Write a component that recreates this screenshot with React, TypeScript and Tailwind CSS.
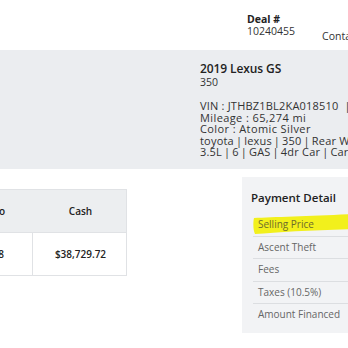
function Sep() {
  return <span className="mx-[2px]">|</span>;
}

export default function App() {
  return (
    <div className="w-[348px] h-[348px] overflow-hidden bg-white font-['Open_Sans',sans-serif] text-[#222]">
      {/* header */}
      <div className="h-[50px] flex items-start pl-[247px] pt-[13px] gap-[27px] whitespace-nowrap">
        <div className="flex flex-col">
          <span className="text-[10.5px] leading-[12px] font-bold">Deal #</span>
          <span className="text-[10.5px] leading-[12px] text-[#333]">10240455</span>
        </div>
        <span className="text-[10.5px] leading-[12px] text-[#333] mt-[17px]">Contact</span>
      </div>

      {/* vehicle band */}
      <div className="h-[119px] bg-[#ebedf0] pl-[200px] pt-[11px] whitespace-nowrap">
        <div className="text-[12px] leading-[15px] font-semibold tracking-[-0.1px]">2019 Lexus GS</div>
        <div className="text-[10.5px] leading-[12px] text-[#333]">350</div>
        <div className="mt-[12px] flex flex-col text-[11px] leading-[11.5px] tracking-[0.2px] text-[#333]">
          <span>VIN : JTHBZ1BL2KA018510&nbsp;&nbsp;|&nbsp;&nbsp;Stock : 18510</span>
          <span className="tracking-[0.4px]">Mileage : 65,274 mi</span>
          <span className="tracking-[0.4px]">Color : Atomic Silver</span>
          <span>toyota<Sep />lexus<Sep />350<Sep />Rear Wheel Drive</span>
          <span>3.5L<Sep />6<Sep />GAS<Sep />4dr Car<Sep />Car<Sep />4</span>
        </div>
      </div>

      {/* lower */}
      <div className="flex items-start">
        <div className="mt-[20px] ml-[-63px] w-[190px] border border-[#e0e2e5] text-[10px] font-semibold whitespace-nowrap">
          <div className="grid grid-cols-[95px_95px] h-[43px] bg-[#eceef0] border-b border-[#e0e2e5]">
            <div className="flex items-center justify-end pr-[28px]">Promo</div>
            <div className="flex items-center justify-center">Cash</div>
          </div>
          <div className="grid grid-cols-[95px_95px] h-[42px]">
            <div className="flex items-center justify-end pr-[28px] border-r border-[#e0e2e5]">$2,538</div>
            <div className="flex items-center justify-center">$38,729.72</div>
          </div>
        </div>

        <div className="ml-[115px] mt-[8px] flex-1 h-[156px] bg-[#f2f3f5] pt-[13px] pl-[9px] whitespace-nowrap">
          <div className="text-[11.5px] leading-[16px] font-semibold text-[#222]">Payment Detail</div>
          <div className="mt-[7px] ml-[2px] flex flex-col text-[10px] text-[#666]">
            <div className="relative h-[22.5px] flex items-center pl-[5px]">
              <svg className="absolute left-0 top-[-2px] w-[100px] h-[24px]" viewBox="0 0 100 24">
                <path d="M1 7 C20 6 60 5 100 3 L100 18 C60 19 25 21 2 23 C0 19 0 11 1 7 Z" fill="#f2f01c" />
              </svg>
              <span className="relative text-[#6d6b2c]">Selling Price</span>
            </div>
            <div className="h-[22.5px] flex items-center pl-[5px] border-t border-[#dcdee1]">Ascent Theft</div>
            <div className="h-[22.5px] flex items-center pl-[5px] border-t border-[#dcdee1]">Fees</div>
            <div className="h-[22.5px] flex items-center pl-[5px] border-t border-[#dcdee1]">Taxes (10.5%)</div>
            <div className="h-[22.5px] flex items-center pl-[5px] border-t border-[#dcdee1]">Amount Financed</div>
          </div>
        </div>
      </div>
    </div>
  );
}
